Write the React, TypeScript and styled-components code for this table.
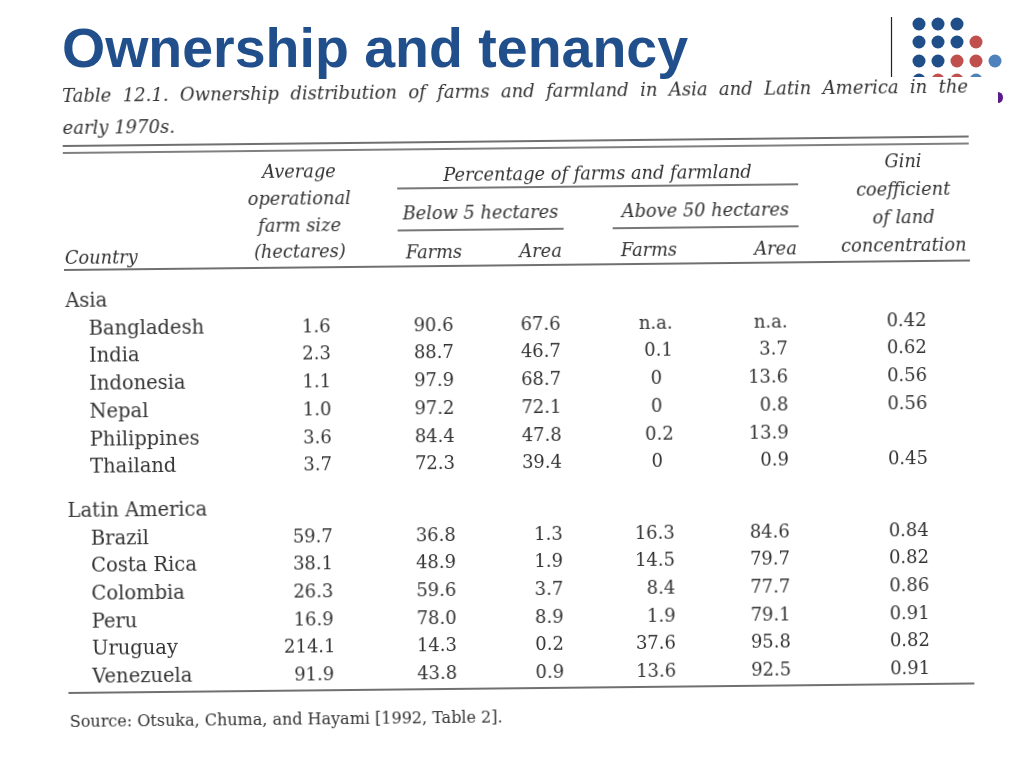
import React from "react";
import styled, { createGlobalStyle } from "styled-components";

const GlobalStyle = createGlobalStyle`
  html, body {
    margin: 0;
    padding: 0;
    background: #fff;
  }
  body {
    width: 1024px;
    height: 768px;
    overflow: hidden;
  }
`;

type Row = { name: string; values: string[] };

const asia: Row[] = [
  { name: "Bangladesh", values: ["1.6", "90.6", "67.6", "n.a.", "n.a.", "0.42"] },
  { name: "India", values: ["2.3", "88.7", "46.7", "0.1", "3.7", "0.62"] },
  { name: "Indonesia", values: ["1.1", "97.9", "68.7", "0", "13.6", "0.56"] },
  { name: "Nepal", values: ["1.0", "97.2", "72.1", "0", "0.8", "0.56"] },
  { name: "Philippines", values: ["3.6", "84.4", "47.8", "0.2", "13.9", ""] },
  { name: "Thailand", values: ["3.7", "72.3", "39.4", "0", "0.9", "0.45"] },
];

const latin: Row[] = [
  { name: "Brazil", values: ["59.7", "36.8", "1.3", "16.3", "84.6", "0.84"] },
  { name: "Costa Rica", values: ["38.1", "48.9", "1.9", "14.5", "79.7", "0.82"] },
  { name: "Colombia", values: ["26.3", "59.6", "3.7", "8.4", "77.7", "0.86"] },
  { name: "Peru", values: ["16.9", "78.0", "8.9", "1.9", "79.1", "0.91"] },
  { name: "Uruguay", values: ["214.1", "14.3", "0.2", "37.6", "95.8", "0.82"] },
  { name: "Venezuela", values: ["91.9", "43.8", "0.9", "13.6", "92.5", "0.91"] },
];

const groups = [
  { label: "Asia", rows: asia },
  { label: "Latin America", rows: latin },
];

function Logo() {
  const blue = "#1f4e89";
  const red = "#c0504d";
  const light = "#4f81bd";
  const dots: [number, number, string][] = [
    [34, 7, blue], [53, 7, blue], [72, 7, blue],
    [34, 25, blue], [53, 25, blue], [72, 25, blue], [91, 25, red],
    [34, 44, blue], [53, 44, blue], [72, 44, red], [91, 44, red], [110, 44, light],
    [34, 63, blue], [53, 63, red], [72, 63, red], [91, 63, light],
  ];
  return (
    <LogoSvg width="139" height="60" viewBox="0 0 139 60">
      <line x1="6.5" y1="0" x2="6.5" y2="60" stroke="#222" strokeWidth="1.2" />
      {dots.map(([cx, cy, c], i) => (
        <circle key={i} cx={cx} cy={cy} r="6.5" fill={c} />
      ))}
    </LogoSvg>
  );
}

export default function App() {
  return (
    <Slide>
      <GlobalStyle />
      <TitleBar>
        <Title>Ownership and tenancy</Title>
        <Logo />
      </TitleBar>
      <Body>
        <Scan>
          <Caption>
            <CaptionLine $justify>
              Table 12.1. Ownership distribution of farms and farmland in Asia and Latin America in the
            </CaptionLine>
            <CaptionLine>early 1970s.</CaptionLine>
          </Caption>
          <DoubleRule />
          <HeadGrid>
            <CountryHead>Country</CountryHead>
            <AvgHead>
              Average
              <br />
              operational
              <br />
              farm size
              <br />
              (hectares)
            </AvgHead>
            <PctHead>Percentage of farms and farmland</PctHead>
            <SubHead $col="4">Below 5 hectares</SubHead>
            <SubHead $col="6">Above 50 hectares</SubHead>
            <LabelPair $col="4">
              <span>Farms</span>
              <span>Area</span>
            </LabelPair>
            <LabelPair $col="6">
              <span>Farms</span>
              <span>Area</span>
            </LabelPair>
            <GiniHead>
              Gini
              <br />
              coefficient
              <br />
              of land
              <br />
              concentration
            </GiniHead>
          </HeadGrid>
          <Rule />
          <Groups>
            {groups.map((g) => (
              <Group key={g.label}>
                <GroupLabel>{g.label}</GroupLabel>
                {g.rows.map((r) => (
                  <DataRow key={r.name}>
                    <Country>{r.name}</Country>
                    {r.values.map((v, i) => (
                      <Num key={i} $pad={v === "0"}>
                        {v}
                      </Num>
                    ))}
                  </DataRow>
                ))}
              </Group>
            ))}
          </Groups>
          <Rule />
          <Source>Source: Otsuka, Chuma, and Hayami [1992, Table 2].</Source>
        </Scan>
        <Side>
          <Mark viewBox="0 0 5 11" width="5" height="11">
            <path d="M0 0 A5 5.5 0 0 1 0 11 Z" fill="#5b1a8c" />
          </Mark>
        </Side>
      </Body>
    </Slide>
  );
}

const Slide = styled.div`
  width: 1024px;
  height: 768px;
  overflow: hidden;
  background: #fff;
  display: flex;
  flex-direction: column;
`;

const TitleBar = styled.header`
  box-sizing: border-box;
  height: 77px;
  padding: 17px 0 0 62px;
  display: flex;
  flex-direction: row;
  align-items: flex-start;
`;

const Title = styled.h1`
  position: relative;
  z-index: 1;
  margin: 3px 0 0;
  font-family: "Liberation Sans", Arial, sans-serif;
  font-weight: bold;
  font-size: 55.5px;
  line-height: 56px;
  color: #214f8c;
  white-space: nowrap;
`;

const LogoSvg = styled.svg`
  margin-left: auto;
  display: block;
  flex: none;
`;

const Body = styled.main`
  flex: 1;
  display: flex;
  flex-direction: row;
  padding-left: 62px;
`;

const Scan = styled.section`
  width: 906px;
  flex: none;
  overflow: hidden;
  color: #333;
  font-family: "DejaVu Serif", "Liberation Serif", serif;
  transform-origin: top left;
  transform: rotate(-0.6deg);
  filter: blur(0.3px);
`;

const Caption = styled.div`
  padding-top: 3px;
  font-style: italic;
  font-size: 18px;
  line-height: 32px;
`;

const CaptionLine = styled.div<{ $justify?: boolean }>`
  white-space: ${({ $justify }) => ($justify ? "normal" : "nowrap")};
  text-align: ${({ $justify }) => ($justify ? "justify" : "left")};
  text-align-last: ${({ $justify }) => ($justify ? "justify" : "left")};
`;

const DoubleRule = styled.div`
  margin-top: 1px;
  height: 5px;
  border-top: 2px solid #707070;
  border-bottom: 2px solid #808080;
`;

const HeadGrid = styled.div`
  display: grid;
  grid-template-columns: 180px 112px 42px 166px 49px 186px 1fr;
  grid-template-rows: auto auto auto;
  font-style: italic;
  font-size: 17.8px;
  line-height: 24px;
`;

const CountryHead = styled.div`
  grid-column: 1;
  grid-row: 1 / 4;
  align-self: end;
  padding-left: 1px;
  margin-bottom: -2px;
`;

const AvgHead = styled.div`
  grid-column: 2;
  grid-row: 1 / 4;
  align-self: end;
  justify-self: center;
  text-align: center;
  white-space: nowrap;
  line-height: 26.7px;
`;

const PctHead = styled.div`
  grid-column: 4 / 7;
  grid-row: 1;
  margin-top: 13px;
  text-align: center;
  white-space: nowrap;
  border-bottom: 2px solid #777;
`;

const SubHead = styled.div<{ $col: string }>`
  grid-column: ${({ $col }) => $col};
  grid-row: 2;
  margin-top: 12px;
  padding-bottom: 4px;
  text-align: center;
  white-space: nowrap;
  border-bottom: 2px solid #777;
`;

const LabelPair = styled.div<{ $col: string }>`
  grid-column: ${({ $col }) => $col};
  grid-row: 3;
  margin-top: 9px;
  display: flex;
  justify-content: space-between;
  padding: 0 2px 0 8px;
`;

const GiniHead = styled.div`
  grid-column: 7;
  grid-row: 1 / 4;
  align-self: end;
  padding-left: 39px;
  text-align: center;
  white-space: nowrap;
  line-height: 28px;
`;

const Rule = styled.div`
  margin-top: 1px;
  height: 0;
  border-top: 2px solid #707070;
`;

const Groups = styled.div`
  padding-top: 16px;
  display: flex;
  flex-direction: column;
  gap: 16px;
`;

const Group = styled.div`
  display: flex;
  flex-direction: column;
`;

const GroupLabel = styled.div`
  font-size: 19.5px;
  line-height: 27.7px;
  padding-left: 1px;
`;

const DataRow = styled.div`
  display: grid;
  grid-template-columns: 216px 50px 123px 107px 112px 115px 139px 1fr;
  line-height: 27.7px;
`;

const Country = styled.div`
  font-size: 19.5px;
  padding-left: 24px;
  white-space: nowrap;
`;

const Num = styled.div<{ $pad?: boolean }>`
  font-size: 18px;
  text-align: right;
  white-space: nowrap;
  padding-right: ${({ $pad }) => ($pad ? "11px" : "0")};
`;

const Source = styled.div`
  margin-top: 16px;
  font-size: 16px;
  line-height: 24px;
  padding-left: 1px;
`;

const Side = styled.aside`
  flex: 1;
  padding: 15px 0 0 30px;
`;

const Mark = styled.svg`
  display: block;
`;
